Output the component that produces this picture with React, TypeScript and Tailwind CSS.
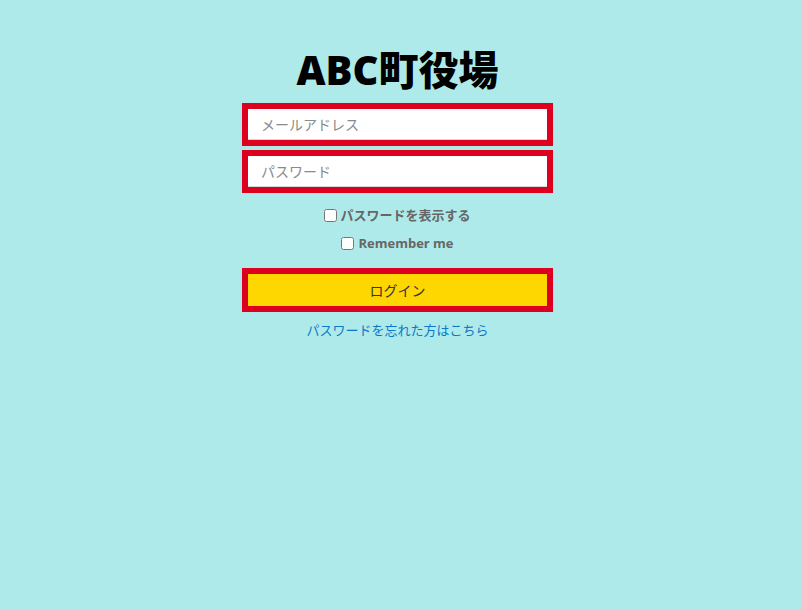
import React from "react";

export default function App() {
  const font = { fontFamily: '"Open Sans", "Noto Sans CJK JP", sans-serif' };
  return (
    <div
      className="min-h-[610px] w-full bg-[#afeaea] flex justify-center pr-[6px]"
      style={font}
    >
      <div className="w-[311px] flex flex-col items-center pt-[42px]">
        <h1 className="text-[40px] leading-[56px] font-extrabold text-black tracking-[0px]">
          ABC町役場
        </h1>
        <div className="mt-[5px] w-full border-[6px] border-[#dd001f] bg-white">
          <input
            className="w-full h-[31px] px-[13px] text-[14px] text-[#333] placeholder:text-[#8a8a8a] outline-none shadow-[inset_0_-1px_0_#d8d8d8]"
            placeholder="メールアドレス"
          />
        </div>
        <div className="mt-[4px] w-full border-[6px] border-[#dd001f] bg-white">
          <input
            type="password"
            className="w-full h-[31px] px-[13px] text-[14px] text-[#333] placeholder:text-[#8a8a8a] outline-none shadow-[inset_0_-1px_0_#d8d8d8]"
            placeholder="パスワード"
          />
        </div>
        <label className="mt-[12px] flex items-center gap-[3px] text-[13px] font-bold text-[#666] leading-[20px]">
          <input type="checkbox" className="w-[13px] h-[13px] m-0" />
          パスワードを表示する
        </label>
        <label className="mt-[8px] flex items-center gap-[4px] text-[13px] font-bold text-[#666] leading-[20px]">
          <input type="checkbox" className="w-[13px] h-[13px] m-0" />
          Remember me
        </label>
        <button className="mt-[15px] w-full h-[44px] border-[6px] border-[#dd001f] bg-[#ffd700] text-[14px] text-[#333]">
          ログイン
        </button>
        <a className="mt-[8px] text-[13px] text-[#0a78c8] leading-[20px]" href="#">
          パスワードを忘れた方はこちら
        </a>
      </div>
    </div>
  );
}
